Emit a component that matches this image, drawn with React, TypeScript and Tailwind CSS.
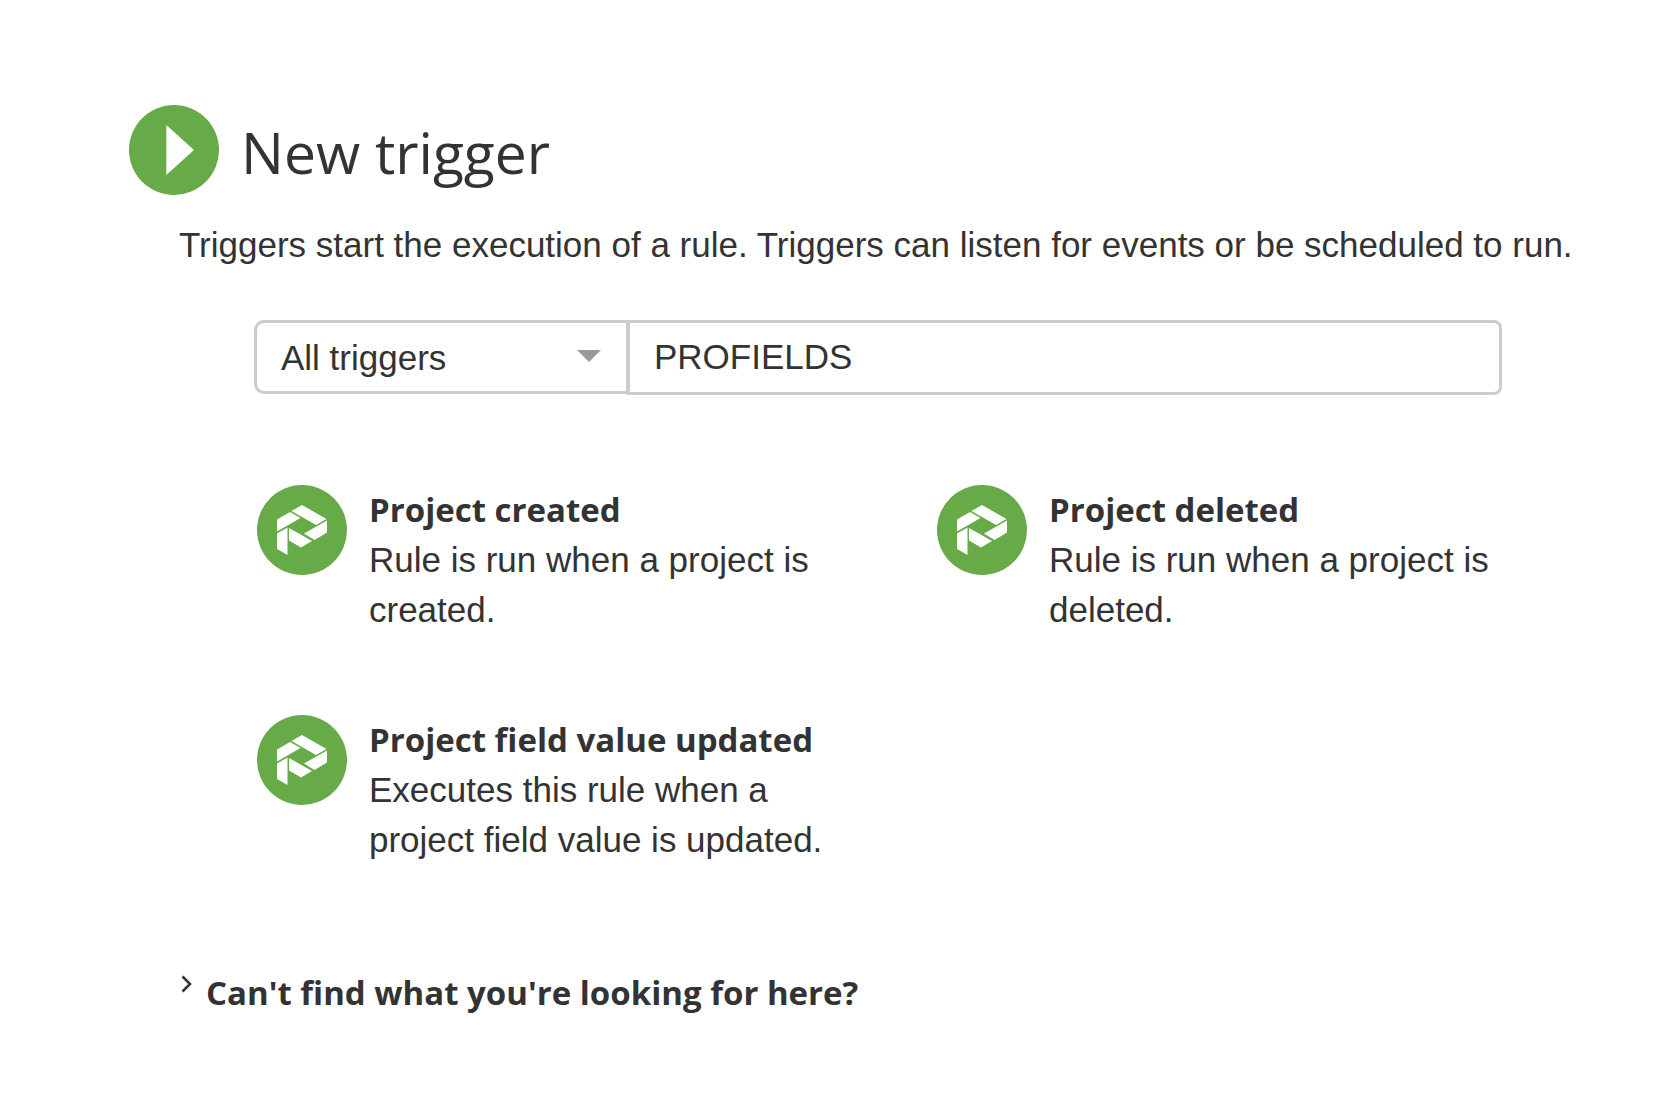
import React, { useState } from 'react';

interface Trigger {
  id: string;
  title: string;
  description: string;
}

const triggers: Trigger[] = [
  { id: 'created', title: 'Project created', description: 'Rule is run when a project is created.' },
  { id: 'deleted', title: 'Project deleted', description: 'Rule is run when a project is deleted.' },
  {
    id: 'updated',
    title: 'Project field value updated',
    description: 'Executes this rule when a project field value is updated.',
  },
];

function PlayIcon() {
  return (
    <svg viewBox="0 0 90 90" className="size-[90px] shrink-0" aria-hidden="true">
      <circle cx="45" cy="45" r="45" fill="#67ab49" />
      <path d="M37.3 20 L65 45 L37.3 70 Z" fill="#fff" />
    </svg>
  );
}

function ProfieldsIcon() {
  return (
    <svg viewBox="0 0 90 90" className="size-[90px] shrink-0" aria-hidden="true">
      <circle cx="45" cy="45" r="45" fill="#67ab49" />
      <g fill="#fff">
        <path d="M45 20 L69.5 34 L59 40 L34.5 26 Z" />
        <path d="M33 27 L43.5 33 L20 46.5 L20 34.5 Z" />
        <path d="M70 35.5 L70 47.5 L57.5 55 L47 48.5 Z" />
        <path d="M32 43 L55 56 L44 62.5 L32 55.5 Z" />
        <path d="M20 48.5 L30.5 42.5 L30.5 70 L20 64 Z" />
      </g>
    </svg>
  );
}

export default function App() {
  const [filter, setFilter] = useState('all');
  const [query, setQuery] = useState('PROFIELDS');

  return (
    <main className="bg-white pt-[105px] pb-20 pl-[129px] pr-[72px] font-['Liberation_Sans',Arial,sans-serif] text-[35px] leading-[50px] text-[#333]">
      {/* Title */}
      <div className="flex items-center gap-[22px]">
        <PlayIcon />
        <h1 className="pt-1 font-['Open_Sans','Noto_Sans',sans-serif] text-[57px] leading-[80px]">New trigger</h1>
      </div>

      <p className="mt-[25px] ml-[50px]">
        Triggers start the execution of a rule. Triggers can listen for events or be scheduled to run.
      </p>

      {/* Filter and search */}
      <div className="mt-[50px] mr-[100px] ml-[125px] flex items-start">
        <div className="relative w-[375px] shrink-0">
          <select
            aria-label="Trigger category"
            value={filter}
            onChange={(e) => setFilter(e.target.value)}
            className="block h-[74px] w-full appearance-none rounded-l-[10px] border-[3px] border-[#ccc] bg-white pt-0.5 pr-16 pl-6 outline-none"
          >
            <option value="all">All triggers</option>
            <option value="issue">Issue triggers</option>
            <option value="scheduled">Scheduled</option>
          </select>
          <svg viewBox="0 0 24 12" className="pointer-events-none absolute top-[30px] right-7 h-3 w-6" aria-hidden="true">
            <path d="M0 0 H24 L12 12 Z" fill="#999" />
          </svg>
        </div>
        <input
          type="text"
          aria-label="Search triggers"
          value={query}
          onChange={(e) => setQuery(e.target.value)}
          className="-ml-0.5 h-[75px] min-w-0 flex-1 rounded-r-[8px] border-[3px] border-[#ccc] bg-transparent px-6 pb-0.5 outline-none"
        />
      </div>

      {/* Trigger list */}
      <ul className="mt-[90px] mr-[75px] ml-32 grid grid-cols-2 gap-x-[90px] gap-y-20">
        {triggers.map((trigger) => (
          <li key={trigger.id}>
            <button type="button" className="flex w-full items-start gap-[22px] text-left">
              <ProfieldsIcon />
              <span className="block">
                <span className="block font-['Open_Sans','Noto_Sans',sans-serif] text-[33px] font-bold">{trigger.title}</span>
                <span className="block">{trigger.description}</span>
              </span>
            </button>
          </li>
        ))}
      </ul>

      <button
        type="button"
        className="mt-[103px] ml-[52px] flex items-start gap-[14px] font-['Open_Sans','Noto_Sans',sans-serif] text-[33px] font-bold"
      >
        <svg viewBox="0 0 11 18" className="mt-[7px] h-[18px] w-[11px]" aria-hidden="true">
          <path d="M1.5 1.5 L9 9 L1.5 16.5" fill="none" stroke="#333" strokeWidth="2.5" />
        </svg>
        Can't find what you're looking for here?
      </button>
    </main>
  );
}
